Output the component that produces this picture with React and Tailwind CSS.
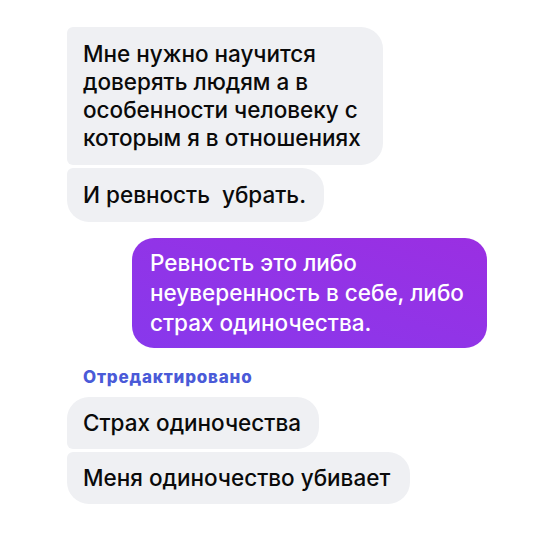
export default function App() {
  const font = { fontFamily: 'Inter, "Noto Sans", sans-serif' };
  const gray = "bg-[#eff0f3] text-[#0a0a0a] text-[22.5px] font-[450] leading-[28px] pl-4 whitespace-nowrap";
  return (
    <div className="w-[560px] h-[560px] bg-white overflow-hidden" style={font}>
      <div className="flex flex-col pt-[27px] pl-[67px]">
        <div className="flex flex-col gap-[3px] items-start">
          <div className={gray + " pr-[22px] py-[13px] rounded-tl-[6px] rounded-bl-[6px] rounded-tr-[22px] rounded-br-[22px]"}>
            Мне нужно научится<br />доверять людям а в<br />особенности человеку с<br />которым я в отношениях
          </div>
          <div className={gray + " pr-[18px] py-[13px] rounded-tl-[6px] rounded-bl-[22px] rounded-tr-[22px] rounded-br-[22px]"}>
            И ревность&nbsp; убрать.
          </div>
        </div>
        <div className="flex justify-start pl-[65px] mt-[16px]">
          <div className="bg-gradient-to-bl from-[#9a2fe2] to-[#8838ec] text-white text-[22.5px] font-[450] leading-[30px] pl-[18px] pr-6 py-[10px] rounded-[22px] w-[355px] whitespace-nowrap">
            Ревность это либо<br />неуверенность в себе, либо<br />страх одиночества.
          </div>
        </div>
        <div className="mt-[20px] pl-4 text-[#4a5ad8] text-[17px] font-extrabold tracking-[0.8px] leading-[18px]">
          Отредактировано
        </div>
        <div className="flex flex-col gap-[3px] items-start mt-[11px]">
          <div className={gray + " pr-[18px] py-3 rounded-tl-[22px] rounded-bl-[6px] rounded-tr-[22px] rounded-br-[22px]"}>
            Страх одиночества
          </div>
          <div className={gray + " pr-5 py-3 rounded-tl-[6px] rounded-bl-[22px] rounded-tr-[22px] rounded-br-[22px]"}>
            Меня одиночество убивает
          </div>
        </div>
      </div>
    </div>
  );
}
